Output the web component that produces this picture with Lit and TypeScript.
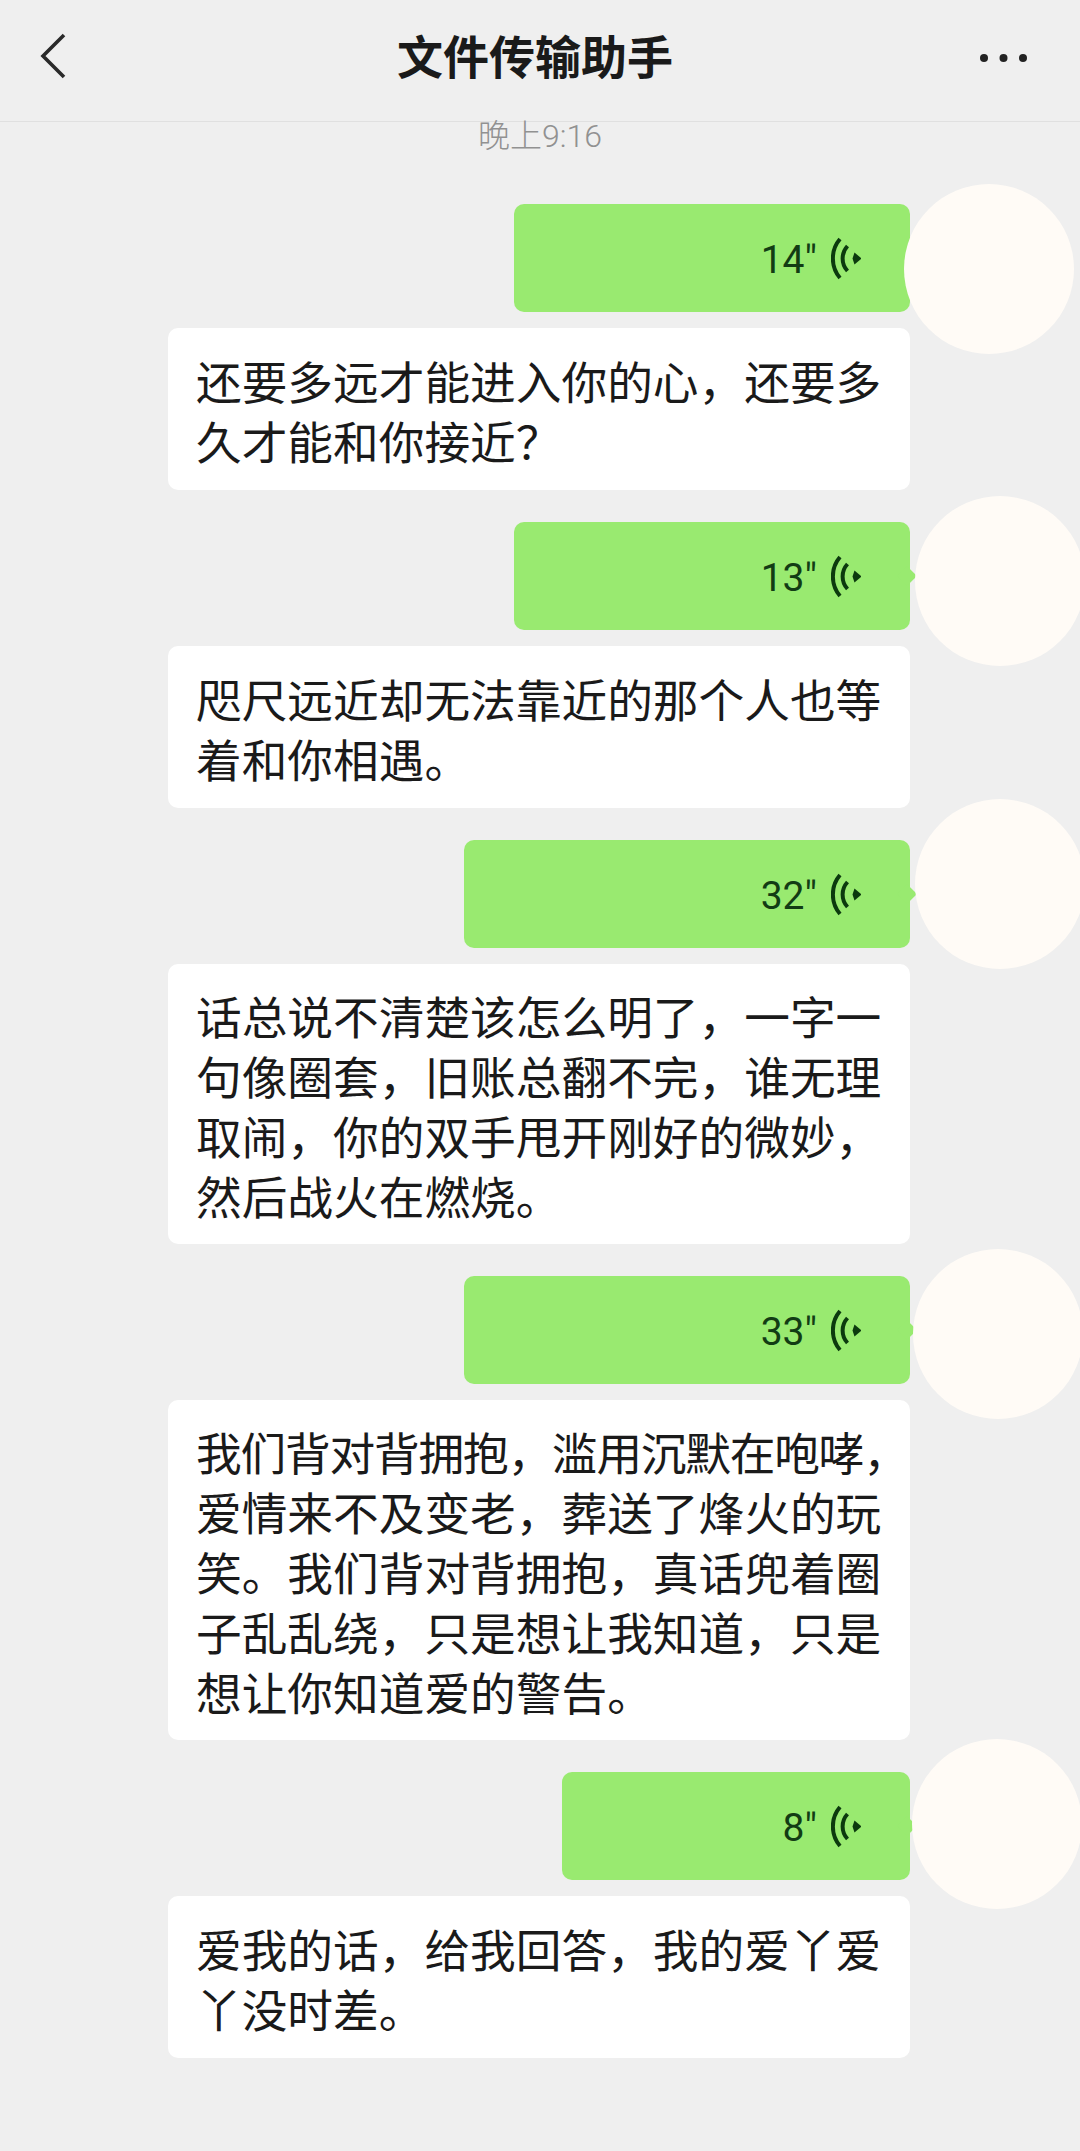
import { LitElement, html, css, svg } from "lit";
import { customElement } from "lit/decorators.js";
import { classMap } from "lit/directives/class-map.js";

interface Msg {
  width: number;
  secs: string;
  avatarTop: number;
  avatarLeft: number;
  lines: string[];
}

const MSGS: Msg[] = [
  { width: 396, secs: '14"', avatarTop: -20, avatarLeft: 736, lines: ["还要多远才能进入你的心，还要多", "久才能和你接近？"] },
  { width: 396, secs: '13"', avatarTop: -26, avatarLeft: 747, lines: ["咫尺远近却无法靠近的那个人也等", "着和你相遇。"] },
  { width: 446, secs: '32"', avatarTop: -41, avatarLeft: 747, lines: ["话总说不清楚该怎么明了，一字一", "句像圈套，旧账总翻不完，谁无理", "取闹，你的双手甩开刚好的微妙，", "然后战火在燃烧。"] },
  { width: 446, secs: '33"', avatarTop: -27, avatarLeft: 745, lines: ["我们背对背拥抱，滥用沉默在咆哮，", "爱情来不及变老，葬送了烽火的玩", "笑。我们背对背拥抱，真话兜着圈", "子乱乱绕，只是想让我知道，只是", "想让你知道爱的警告。"] },
  { width: 348, secs: '8"', avatarTop: -33, avatarLeft: 744, lines: ["爱我的话，给我回答，我的爱丫爱", "丫没时差。"] },
];

const voiceIcon = svg`<svg class="wave" viewBox="0 0 30 43" width="30" height="43" fill="none" stroke="#0c3a0e" stroke-width="4" stroke-linecap="butt">
  <path d="M9 2 C-0.5 13 -0.5 30 9 41" />
  <path d="M16.5 9 C10 16 10 27 16.5 34" />
  <path d="M21.5 21.5 L23.5 15.5 L30.5 21.5 L23.5 27.5 Z" fill="#0c3a0e" stroke="none" />
</svg>`;

@customElement("app-root")
export class AppRoot extends LitElement {
  static styles = css`
    :host {
      display: block;
      width: 1080px;
      height: 2151px;
      background: #efefef;
      overflow: hidden;
      font-family: "Noto Sans CJK SC", "Liberation Sans", sans-serif;
    }
    .bar {
      height: 121px;
      box-sizing: content-box;
      border-bottom: 1px solid #e0e0e0;
      display: grid;
      grid-template-columns: 1fr auto 1fr;
      align-items: start;
      padding: 0 52px 0 38px;
    }
    .back {
      display: block;
      margin-top: 32px;
    }
    .title {
      font-size: 46px;
      font-weight: 700;
      color: #1a1a1a;
      line-height: 60px;
      margin-top: 24px;
      margin-left: 4px;
    }
    .more {
      justify-self: end;
      display: block;
      margin-top: 53px;
    }
    .time {
      text-align: center;
      font-family: "Roboto", "Noto Sans CJK SC", sans-serif;
      font-size: 32px;
      font-weight: 300;
      line-height: 34px;
      color: #919191;
      height: 34px;
      margin-bottom: 51px;
      margin-top: -3px;
    }
    .list {
      display: flex;
      flex-direction: column;
      align-items: flex-end;
      padding-right: 170px;
      gap: 32px;
    }
    .msg {
      display: flex;
      flex-direction: column;
      align-items: flex-end;
      gap: 16px;
      position: relative;
    }
    .voice {
      height: 108px;
      background: #99ea70;
      border-radius: 10px;
      display: flex;
      align-items: center;
      justify-content: flex-end;
      gap: 14px;
      padding: 0 49px 0 0;
      box-sizing: border-box;
      font-family: "Roboto", "Liberation Sans", sans-serif;
      font-size: 39px;
      color: #123c14;
      position: relative;
    }
    .voice::after {
      content: "";
      position: absolute;
      right: -4px;
      top: 47px;
      width: 14px;
      height: 14px;
      background: #99ea70;
      transform: rotate(45deg);
      border-radius: 2px;
    }
    .secs {
      margin-top: 3px;
    }
    .wave {
      display: block;
    }
    .avatar {
      position: absolute;
      width: 170px;
      height: 170px;
      border-radius: 50%;
      background: #fffbf6;
      z-index: 1;
    }
    .text {
      width: 742px;
      min-height: 162px;
      box-sizing: border-box;
      background: #ffffff;
      border-radius: 10px;
      padding: 21px 28px 19px;
      display: flex;
      flex-direction: column;
      justify-content: center;
      font-size: 45.7px;
      line-height: 60px;
      color: #1a1a1a;
      white-space: nowrap;
    }
    .line {
      display: block;
    }
    .tight {
      letter-spacing: -1.2px;
    }
  `;

  render() {
    return html`
      <header class="bar">
        <svg class="back" width="32" height="50" viewBox="0 0 32 50" fill="none" stroke="#2a2a2a" stroke-width="3.6">
          <path d="M26 3 L5 24 L26 45" />
        </svg>
        <div class="title">文件传输助手</div>
        <svg class="more" width="48" height="10" viewBox="0 0 48 10" fill="#222222">
          <circle cx="4" cy="5" r="4" />
          <circle cx="23.5" cy="5" r="4" />
          <circle cx="43" cy="5" r="4" />
        </svg>
      </header>
      <div class="time">晚上9:16</div>
      <main class="list">
        ${MSGS.map(
          (m) => html`
            <section class="msg">
              <div class="voice" style="width:${m.width}px">
                <span class="secs">${m.secs}</span>
                ${voiceIcon}
              </div>
              <div class="avatar" style="top:${m.avatarTop}px;left:${m.avatarLeft}px"></div>
              <div class="text">
                ${m.lines.map(
                  (l) => html`<span class=${classMap({ line: true, tight: l.length > 15 })}>${l}</span>`
                )}
              </div>
            </section>
          `
        )}
      </main>
    `;
  }
}
